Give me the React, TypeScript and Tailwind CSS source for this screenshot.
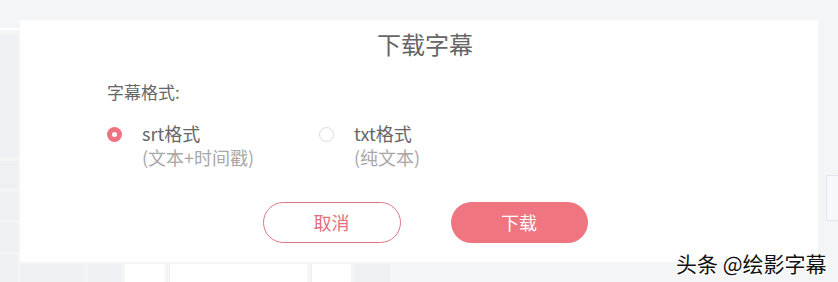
import React from "react";

const cjk = '"Noto Sans CJK SC", "Noto Sans", sans-serif';

export default function App() {
  return (
    <div
      className="relative w-[838px] h-[282px] overflow-hidden bg-[#f4f5f7]"
      style={{ fontFamily: cjk }}
    >
      {/* background page */}
      <div className="flex h-full">
        <div className="flex flex-col w-[20px] pt-[28px] gap-[4px]">
          <div className="h-[2px] w-full bg-white" />
          <div className="h-[126px] w-[18px] bg-[#eff0f3]" />
          <div className="h-[28px] w-[18px] bg-[#eff0f3]" />
          <div className="h-[28px] w-[18px] bg-[#eff0f3]" />
          <div className="h-[28px] w-[18px] bg-[#eff0f3]" />
          <div className="h-[28px] w-[18px] bg-[#eff0f3]" />
        </div>
        <div className="flex-1 flex flex-col">
          <div className="h-[262px]" />
          <div className="flex gap-[4px] h-[20px] pt-[2px]">
            <div className="w-[64px] bg-[#eff0f3]" />
            <div className="w-[33px] bg-[#eff0f3]" />
            <div className="w-[40px] bg-white" />
            <div className="w-[138px] bg-white border-l border-[#eceef1]" />
            <div className="w-[40px] bg-white border-l border-[#eceef1]" />
            <div className="w-[35px] bg-[#f0f1f4]" />
            <div className="flex-1 bg-[#f4f5f7]" />
          </div>
        </div>
        <div className="w-[20px] flex flex-col pt-[175px]">
          <div className="ml-[8px] h-[46px] border-l border-b border-t border-[#e2e4ee] bg-[#f7f8fb]" />
        </div>
      </div>

      {/* dialog */}
      <div className="absolute left-[20px] top-[20px] w-[798px] h-[242px] bg-white flex flex-col">
        <div className="h-[48px] flex items-center justify-center pl-[12px] text-[24px] text-[#666666] leading-none">
          下载字幕
        </div>
        <div className="pl-[87px] pt-[14px] text-[17px] leading-[20px] text-[#666666]">
          字幕格式:
        </div>
        <div className="flex pl-[87px] pt-[19px]">
          <div className="flex w-[212px]">
            <div className="pt-[6px] w-[35px]">
              <div className="w-[15px] h-[15px] rounded-full bg-[#ef7281] flex items-center justify-center">
                <div className="w-[5px] h-[5px] rounded-full bg-white" />
              </div>
            </div>
            <div className="flex flex-col text-[18px] leading-[24px]">
              <span className="text-[#666666]">srt格式</span>
              <span className="text-[#a8a8a8]">(文本+时间戳)</span>
            </div>
          </div>
          <div className="flex">
            <div className="pt-[6px] w-[35px]">
              <div className="w-[15px] h-[15px] rounded-full border border-[#dcdcdc] bg-white" />
            </div>
            <div className="flex flex-col text-[18px] leading-[24px]">
              <span className="text-[#666666]">txt格式</span>
              <span className="text-[#a8a8a8]">(纯文本)</span>
            </div>
          </div>
        </div>
        <div className="flex justify-center gap-[50px] pl-[12px] pt-[33px]">
          <button className="w-[138px] h-[41px] rounded-full border border-[#e07684] bg-white text-[#e5707f] text-[18px] flex items-center justify-center">
            取消
          </button>
          <button className="w-[137px] h-[41px] rounded-full bg-[#ef7581] text-white text-[18px] flex items-center justify-center">
            下载
          </button>
        </div>
      </div>

      {/* watermark */}
      <div
        className="absolute left-[676px] top-[250px] text-[21px] leading-[26px] text-[#111111] whitespace-nowrap"
        style={{
          textShadow:
            "1px 0 0 #fff, -1px 0 0 #fff, 0 1px 0 #fff, 0 -1px 0 #fff, 1px 1px 0 #fff, -1px -1px 0 #fff, 1px -1px 0 #fff, -1px 1px 0 #fff",
        }}
      >
        头条 @绘影字幕
      </div>
    </div>
  );
}
